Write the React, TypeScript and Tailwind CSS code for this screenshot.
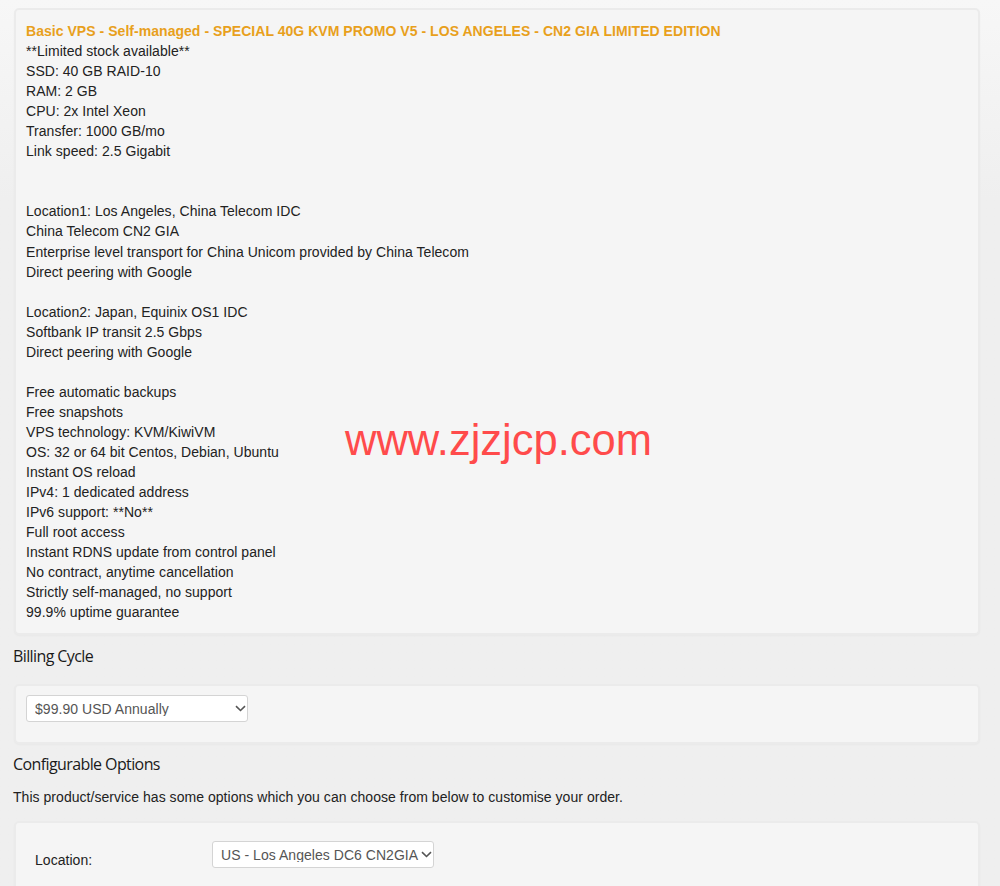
import React from "react";

const Chevron = () => (
  <svg width="11" height="7" viewBox="0 0 11 7" className="shrink-0">
    <path d="M1 1.2 L5.5 5.5 L10 1.2" fill="none" stroke="#555" strokeWidth="1.6" />
  </svg>
);

const FakeSelect = ({ text, width }: { text: string; width: string }) => (
  <div
    className={`${width} h-[27px] bg-white border border-[#d4d4d4] rounded-[3px] flex items-center pl-[8px] pr-[1px] gap-[1px] overflow-hidden`}
  >
    <span className="flex-1 whitespace-nowrap overflow-hidden text-[14px] text-[#555] leading-none">
      {text}
    </span>
    <Chevron />
  </div>
);

const lines: string[] = [
  "**Limited stock available**",
  "SSD: 40 GB RAID-10",
  "RAM: 2 GB",
  "CPU: 2x Intel Xeon",
  "Transfer: 1000 GB/mo",
  "Link speed: 2.5 Gigabit",
  "",
  "",
  "Location1: Los Angeles, China Telecom IDC",
  "China Telecom CN2 GIA",
  "Enterprise level transport for China Unicom provided by China Telecom",
  "Direct peering with Google",
  "",
  "Location2: Japan, Equinix OS1 IDC",
  "Softbank IP transit 2.5 Gbps",
  "Direct peering with Google",
  "",
  "Free automatic backups",
  "Free snapshots",
  "VPS technology: KVM/KiwiVM",
  "OS: 32 or 64 bit Centos, Debian, Ubuntu",
  "Instant OS reload",
  "IPv4: 1 dedicated address",
  "IPv6 support: **No**",
  "Full root access",
  "Instant RDNS update from control panel",
  "No contract, anytime cancellation",
  "Strictly self-managed, no support",
  "99.9% uptime guarantee",
];

const card =
  "ml-[1px] w-[966px] bg-[#f5f5f5] border-2 border-[#ebebeb] rounded-[5px] shadow-[0_1px_2px_rgba(0,0,0,0.03)]";

export default function App() {
  return (
    <div className="min-h-[886px] w-[1000px] bg-gradient-to-b from-[#f7f7f7] to-[#efefef] to-[200px] font-['Liberation_Sans',Arial,sans-serif] text-[#222] text-[14px] leading-[20.05px] tracking-[0.04px] pl-[13px] pt-[8px] relative overflow-hidden">
      <div className={`${card} pl-[10px] pt-[11px] pb-[11px] relative`}>
        <div className="font-bold text-[#e8a01c]">
          Basic VPS - Self-managed - SPECIAL 40G KVM PROMO V5 - LOS ANGELES - CN2 GIA LIMITED EDITION
        </div>
        {lines.map((l, i) => (
          <div key={i} className="h-[20.05px] whitespace-nowrap">
            {l}
          </div>
        ))}
        <div className="absolute left-[329px] top-[409px] text-[43.5px] leading-none tracking-normal text-[#ff4b4b] font-['Liberation_Sans',Arial,sans-serif]">
          www.zjzjcp.com
        </div>
      </div>

      <h2 className="mt-[10px] mb-[17px] font-['Open_Sans',sans-serif] text-[16px] leading-[22px] tracking-[-0.6px] text-[#1a1a1a]">
        Billing Cycle
      </h2>

      <div className={`${card} h-[60px] pl-[10px] pt-[9px]`}>
        <FakeSelect text="$99.90 USD Annually" width="w-[222px]" />
      </div>

      <h2 className="mt-[9px] font-['Open_Sans',sans-serif] text-[16px] leading-[22px] tracking-[-0.6px] text-[#1a1a1a]">
        Configurable Options
      </h2>
      <p className="mt-[12px] mb-[14px]">
        This product/service has some options which you can choose from below to customise your order.
      </p>

      <div className={`${card} h-[80px] pt-[18px] flex items-start`}>
        <div className="w-[196px] pl-[19px] pt-[9px] text-[#222]">Location:</div>
        <FakeSelect text="US - Los Angeles DC6 CN2GIA (USCA_6)" width="w-[222px]" />
      </div>
    </div>
  );
}
